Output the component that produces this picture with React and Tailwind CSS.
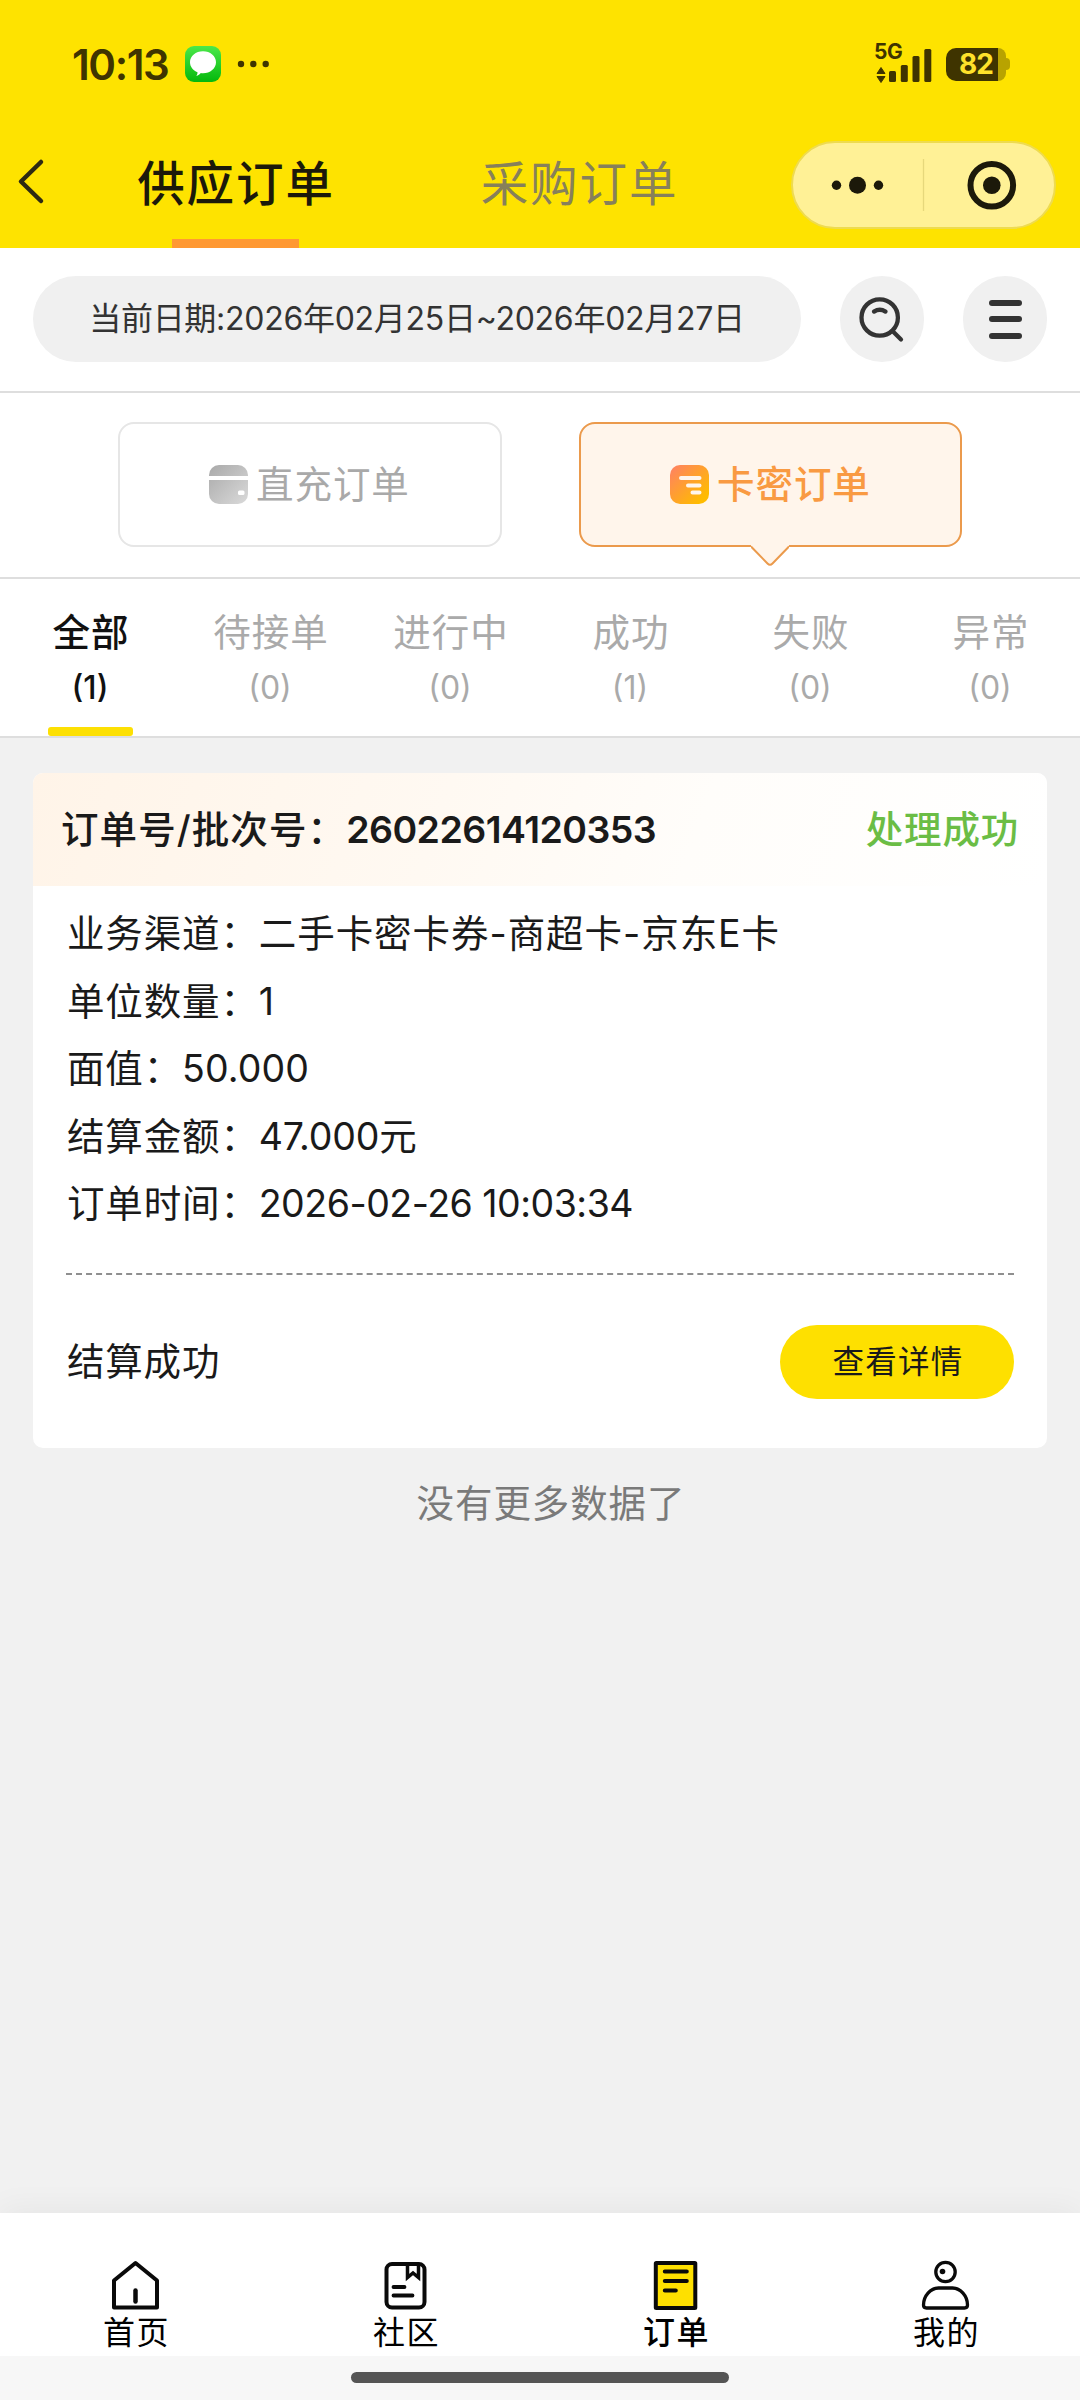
const statusTabs = [
  { name: '全部', count: 1 },
  { name: '待接单', count: 0 },
  { name: '进行中', count: 0 },
  { name: '成功', count: 1 },
  { name: '失败', count: 0 },
  { name: '异常', count: 0 },
];

const rows = [
  { label: '业务渠道：', value: '二手卡密卡券-商超卡-京东E卡', track: 'tracking-[0.950px]' },
  { label: '单位数量：', value: '1', track: 'tracking-[0px]' },
  { label: '面值：', value: '50.000', track: 'tracking-[0.100px]' },
  { label: '结算金额：', value: '47.000元', track: 'tracking-[-0.200px]' },
  { label: '订单时间：', value: '2026-02-26 10:03:34', track: 'tracking-[-0.500px]' },
];

function StatusBar() {
  return (
    <div className="flex h-[128px] items-center pl-[72px] pr-[70px] text-[#3f3400]">
      <span className="w-[97px] whitespace-nowrap pt-[2px] text-[42px] font-semibold leading-none tracking-[-1.400px]">10:13</span>
      <svg className="ml-4" width="36" height="36" viewBox="0 0 36 36">
        <defs>
          <linearGradient id="msg" x1="0" y1="0" x2="0" y2="1">
            <stop offset="0" stopColor="#4be84a" />
            <stop offset="1" stopColor="#04b80c" />
          </linearGradient>
        </defs>
        <rect width="36" height="36" rx="9" fill="url(#msg)" />
        <path d="M18 5.200c7.200 0 13 4.900 13 11s-5.800 11-13 11c-.8 0-1.500-.1-2.200-.2-1 1.400-2.600 2.600-4.600 3 .9-1 1.400-2.400 1.300-3.800C8 24.400 5 20.600 5 16.200c0-6.100 5.800-11 13-11z" fill="#fff" />
      </svg>
      <svg className="ml-4" width="32" height="8" viewBox="0 0 32 8" fill="#3f3400">
        <circle cx="4" cy="4" r="3.200" />
        <circle cx="16.300" cy="4" r="3.200" />
        <circle cx="28.700" cy="4" r="3.200" />
      </svg>
      <div className="ml-auto flex h-10 w-[59px] flex-col">
        <span className="h-4 text-[21px] font-bold leading-[16px] tracking-[-0.500px]">5G</span>
        <svg className="-mt-4 shrink-0" width="59" height="40" viewBox="0 0 59 40" fill="#3f3400">
          <path d="M7 23.500l4 6h-8zM7 38.500l4-6h-8z" stroke="#3f3400" strokeWidth="1" strokeLinejoin="round" />
          <rect x="15" y="27" width="7" height="11" rx="1.500" />
          <rect x="26.800" y="21" width="7" height="17" rx="1.500" />
          <rect x="38.500" y="12" width="7" height="26" rx="1.500" />
          <rect x="50.300" y="5" width="7" height="33" rx="1.500" />
        </svg>
      </div>
      <div className="ml-[13px] flex items-center">
        <div className="flex h-[33px] w-[52px] items-center justify-center rounded-l-[10px] bg-[#3f3400] pl-2 text-[28px] font-bold leading-none tracking-[-1px] text-[#ffe22a]">82</div>
        <div className="h-[33px] w-[8px] rounded-r-[9px] bg-[#b8a300]" />
        <div className="h-[12px] w-[4px] rounded-r-[4px] bg-[#b8a300]" />
      </div>
    </div>
  );
}

function NavBar() {
  return (
    <div className="flex h-[120px] items-start">
      <svg className="mt-[30px] ml-[15px] shrink-0" width="32" height="48" viewBox="0 0 32 48" fill="none" stroke="#2e2a12" strokeWidth="4.500" strokeLinecap="round" strokeLinejoin="round">
        <path d="M26 4L6 23.500L26 43" />
      </svg>
      <div className="ml-[16px] flex h-[120px] w-[344px] flex-col items-center">
        <span className="pl-[2px] pt-[32px] text-[47.500px] font-medium leading-[48px] tracking-[1.900px] text-[#1c190a]">供应订单</span>
        <div className="mt-auto h-[9px] w-[127px] bg-[#ff9933]" />
      </div>
      <span className="w-[343px] pl-[2px] pt-[32px] text-center text-[47.500px] leading-[48px] tracking-[1.900px] text-[#87805a]">采购订单</span>
      <div className="ml-[41px] mt-[13px] flex h-[88px] w-[265px] items-center rounded-full border-2 border-[#eedb50] bg-[#fff196]">
        <svg width="260" height="84" viewBox="0 0 260 84" fill="#1c190a">
          <circle cx="43.500" cy="42.300" r="4.700" />
          <circle cx="64.500" cy="42.300" r="8.500" />
          <circle cx="85.500" cy="42.300" r="4.700" />
          <path d="M130.500 16v52" stroke="#e6d87c" strokeWidth="1.300" />
          <circle cx="198.800" cy="42.300" r="21.300" fill="none" stroke="#1c190a" strokeWidth="6" />
          <circle cx="198.800" cy="42.300" r="8.800" />
        </svg>
      </div>
    </div>
  );
}

function SearchRow() {
  return (
    <div className="flex h-[145px] items-start border-b-2 border-[#dedede] pl-[33px] pt-[28px]">
      <div className="flex h-[86px] w-[768px] items-center justify-center whitespace-nowrap rounded-full bg-[#f0f0f0] text-[32px] text-[#333]">
        <span className="tracking-[-0.280px]">当前日期:2026年02月25日~2026年02月27日</span>
      </div>
      <div className="ml-[39px] flex h-[86px] w-[84px] items-center justify-center rounded-full bg-[#f0f0f0]">
        <svg width="50" height="50" viewBox="0 0 50 50" fill="none" stroke="#333" strokeWidth="4.300" strokeLinecap="round">
          <circle cx="22.700" cy="23.500" r="18.200" />
          <path d="M17 17.600a10.500 10.500 0 0 1 11.500 0" />
          <path d="M36 37.500l8 8" />
        </svg>
      </div>
      <div className="ml-[39px] flex h-[86px] w-[84px] flex-col items-center justify-center gap-[10.500px] rounded-full bg-[#f0f0f0]">
        <div className="h-[6px] w-[33px] rounded-full bg-[#333]" />
        <div className="h-[6px] w-[33px] rounded-full bg-[#333]" />
        <div className="h-[6px] w-[33px] rounded-full bg-[#333]" />
      </div>
    </div>
  );
}

function KindSwitch() {
  return (
    <div className="flex h-[186px] items-start border-b-2 border-[#dedede] pl-[118px] pt-[29px]">
      <div className="flex h-[125px] w-[384px] items-center rounded-[16px] border-2 border-[#e6e6e6] pl-[89px]">
        <svg width="39" height="39" viewBox="0 0 39 39">
          <defs>
            <linearGradient id="gray" x1="0" y1="0" x2="1" y2="1">
              <stop offset="0" stopColor="#a9a9a9" />
              <stop offset="1" stopColor="#dadada" />
            </linearGradient>
          </defs>
          <rect width="39" height="39" rx="10" fill="url(#gray)" />
          <path d="M0 13h39" stroke="#fff" strokeWidth="4" />
          <rect x="29" y="25.500" width="6.500" height="4.500" rx="1.500" fill="#fff" />
        </svg>
        <span className="ml-[8px] text-[37.500px] leading-none tracking-[0.950px] text-[#a9a9a9]">直充订单</span>
      </div>
      <div className="relative ml-[77px] flex h-[125px] w-[383px] items-center rounded-[16px] border-2 border-[#eb9a4c] bg-[#fff5eb] pl-[89px]">
        <svg width="39" height="39" viewBox="0 0 39 39">
          <defs>
            <linearGradient id="orange" x1="0" y1="0" x2="1" y2="1">
              <stop offset="0.050" stopColor="#ff8360" />
              <stop offset="0.850" stopColor="#ffbb00" />
            </linearGradient>
          </defs>
          <rect width="39" height="39" rx="10" fill="url(#orange)" />
          <path d="M11 13h18.500M18 20.500h11.500M22.500 27.500h7" stroke="#fff5eb" strokeWidth="4" strokeLinecap="round" />
        </svg>
        <span className="ml-[8px] text-[37.500px] font-medium leading-none tracking-[0.950px] text-[#f99a42]">卡密订单</span>
        <svg className="absolute left-[170px] top-[121px]" width="38" height="22" viewBox="0 0 38 22">
          <path d="M0 0h38v2L21.500 19.500q-2.500 2-5 0L0 2z" fill="#fff5eb" />
          <path d="M0 1.500L16.500 18.500q2.500 2.500 5 0L38 1.500" fill="none" stroke="#eb9a4c" strokeWidth="2" />
        </svg>
      </div>
    </div>
  );
}

function StatusTabs() {
  return (
    <div className="flex h-[159px] border-b-2 border-[#dedede]">
      {statusTabs.map((t, i) => (
        <div key={t.name} className={i === 0 ? 'flex w-[180px] flex-col items-center text-[#111]' : 'flex w-[180px] flex-col items-center text-[#aaa]'}>
          <span className={i === 0 ? 'mt-[34px] pl-[2px] text-[37.500px] font-medium leading-[40px] tracking-[0.950px]' : 'mt-[34px] pl-[2px] text-[37.500px] leading-[40px] tracking-[0.950px]'}>{t.name}</span>
          <span className={i === 0 ? 'mt-[15px] text-[32px] font-medium leading-[40px]' : 'mt-[15px] text-[32px] leading-[40px]'}>({t.count})</span>
          {i === 0 && <div className="mt-auto h-[9px] w-[85px] rounded-[3px] bg-[#fde003]" />}
        </div>
      ))}
    </div>
  );
}

function OrderCard() {
  return (
    <div className="mx-[33px] mt-[35px] flex h-[675px] shrink-0 flex-col overflow-hidden rounded-[10px] bg-white text-[#1a1a1a]">
      <div className="flex h-[113px] shrink-0 items-center justify-between bg-[linear-gradient(110deg,#fff4e8_0%,#fff9f2_40%,#fffdfa_65%,#ffffff_100%)] pl-[28px] pr-[28px] pt-[2px] text-[37.500px] font-medium">
        <span className="flex whitespace-nowrap">
          <span className="tracking-[1.100px]">订单号/批次号：</span>
          <span className="font-semibold tracking-[-0.550px]">26022614120353</span>
        </span>
        <span className="tracking-[0.800px] text-[#6bbd45]">处理成功</span>
      </div>
      <div className="flex flex-col pl-[34px] pt-[14px]">
        {rows.map((r) => (
          <div key={r.label} className="flex h-[67.500px] items-center whitespace-nowrap text-[37.500px] leading-none">
            <span className="tracking-[0.850px]">{r.label}</span>
            <span className={r.track}>{r.value}</span>
          </div>
        ))}
      </div>
      <div className="mx-[33px] mt-[35px] border-t-2 border-dashed border-[#8f8f8f]" />
      <div className="mt-[50px] flex h-[74px] items-center justify-between pl-[34px] pr-[33px]">
        <span className="text-[37.500px] leading-none tracking-[0.800px]">结算成功</span>
        <div className="flex h-[74px] w-[234px] items-center justify-center rounded-full bg-[#fee000] pl-[2px] text-[31.500px] leading-none tracking-[1.200px]">查看详情</div>
      </div>
    </div>
  );
}

function TabItem({ label, active, children }) {
  return (
    <div className="flex w-[270px] flex-col items-center pt-[46px]">
      <svg width="54" height="54" viewBox="0 0 54 54" fill="none" stroke="#0a0a0a" strokeWidth="4" strokeLinecap="round" strokeLinejoin="round">{children}</svg>
      <span className={active ? 'pl-[3px] pt-px text-[32px] font-medium leading-[38px] tracking-[1.500px] text-black' : 'pl-[3px] pt-px text-[32px] leading-[38px] tracking-[1.500px] text-black'}>{label}</span>
    </div>
  );
}

function TabBar() {
  return (
    <div className="mt-auto bg-white shadow-[0_-4px_30px_rgba(0,0,0,0.05)]">
      <div className="flex h-[143px]">
        <TabItem label="首页">
          <path d="M27.500 4L49 21.500V48.500H6V21.500Z" />
          <path d="M27.500 31.500v11" strokeWidth="4.500" />
        </TabItem>
        <TabItem label="社区">
          <rect x="8.500" y="5" width="38" height="43.500" rx="5.500" />
          <path d="M29.500 6v12.500l5.500-4.500l5.500 4.500V6" strokeLinejoin="miter" strokeLinecap="butt" strokeWidth="3.500" />
          <path d="M15.500 28h11M15.500 36.500h19" strokeWidth="3.800" />
        </TabItem>
        <TabItem label="订单" active>
          <rect x="7.800" y="4" width="39.500" height="45" rx="0.500" fill="#fee000" />
          <path d="M16.800 12.500h22M16.800 22h22M16.800 31.500h11" />
        </TabItem>
        <TabItem label="我的">
          <circle cx="27.500" cy="13" r="9.700" strokeWidth="3.300" />
          <circle cx="24.500" cy="12.500" r="2.800" fill="#0a0a0a" stroke="none" />
          <path d="M20.500 29h14c8 0 15 8 15 17q0 3-3 3H8.500q-3 0-3-3c0-9 7-17 15-17z" strokeWidth="3.300" />
        </TabItem>
      </div>
      <div className="flex h-[44px] justify-center bg-[#f7f7f7] pt-[16px]">
        <div className="h-[11px] w-[378px] rounded-full bg-[#555]" />
      </div>
    </div>
  );
}

export default function App() {
  return (
    <div lang="zh-CN" className="flex h-[2400px] w-[1080px] flex-col overflow-hidden bg-[#f1f1f1] font-['Inter','Noto_Sans_CJK_SC',sans-serif]">
      <div className="h-[248px] shrink-0 bg-[#fee300]">
        <StatusBar />
        <NavBar />
      </div>
      <div className="shrink-0 bg-white">
        <SearchRow />
        <KindSwitch />
        <StatusTabs />
      </div>
      <OrderCard />
      <div className="mt-[36px] pl-[22px] text-center text-[37.500px] leading-[40px] tracking-[0.900px] text-[#7a7a7a]">没有更多数据了</div>
      <TabBar />
    </div>
  );
}
